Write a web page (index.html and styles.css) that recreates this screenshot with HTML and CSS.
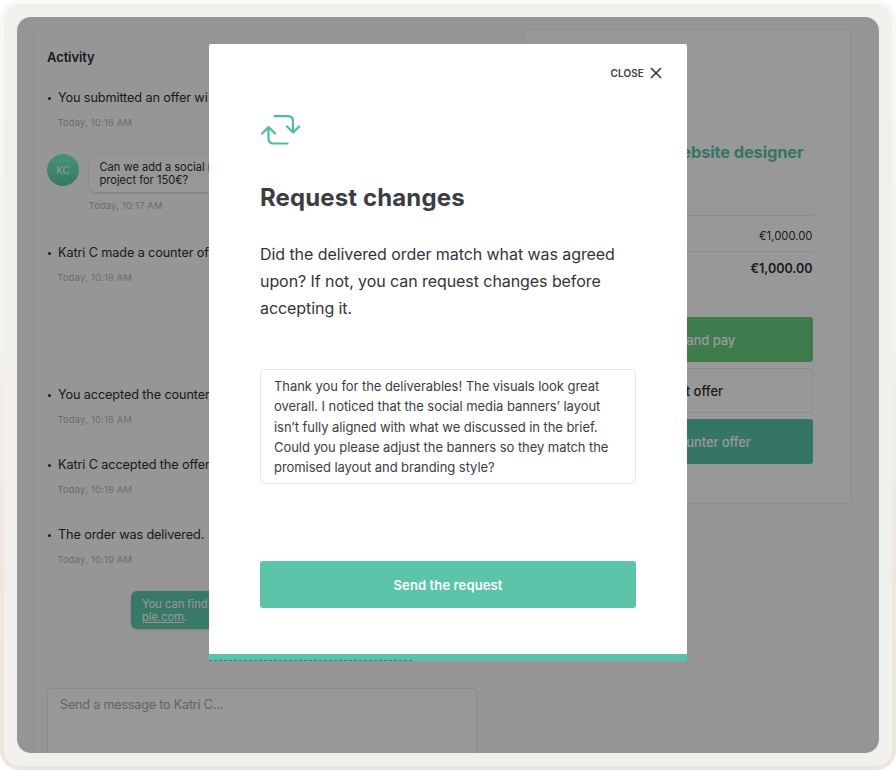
FILE: index.html
```
<!DOCTYPE html>
<html lang="en">
<head>
    <meta charset="UTF-8">
    <meta name="viewport" content="width=device-width, initial-scale=1.0">
    <title>Request changes</title>
    <link rel="stylesheet" href="styles.css">
</head>
<body>
<div class="frame">
    <div class="screen">
        <!-- Activity feed -->
        <div class="activity">
            <h3>Activity</h3>
            <div class="event">
                <p>You submitted an offer wi</p>
                <time>Today, 10:16 AM</time>
            </div>
            <div class="message">
                <div class="avatar">KC</div>
                <div class="message-body">
                    <div class="bubble">Can we add a social m<br>project for 150€?</div>
                    <time>Today, 10:17 AM</time>
                </div>
            </div>
            <div class="event">
                <p>Katri C made a counter of</p>
                <time>Today, 10:18 AM</time>
            </div>
            <div class="event event-gap">
                <p>You accepted the counter</p>
                <time>Today, 10:18 AM</time>
            </div>
            <div class="event">
                <p>Katri C accepted the offer</p>
                <time>Today, 10:18 AM</time>
            </div>
            <div class="event">
                <p>The order was delivered.</p>
                <time>Today, 10:19 AM</time>
            </div>
            <div class="bubble bubble-own">You can find<br><a>ple.com</a>.</div>
            <div class="message-input">Send a message to Katri C...</div>
        </div>

        <!-- Order summary -->
        <div class="order">
            <h2>Website designer</h2>
            <div class="price">€1,000.00</div>
            <div class="price total">€1,000.00</div>
            <div class="order-buttons">
                <button class="btn-green">Accept and pay</button>
                <button class="btn-outline">Reject offer</button>
                <button class="btn-teal">Make a counter offer</button>
            </div>
        </div>

        <!-- Request changes modal -->
        <div class="overlay">
            <div class="modal">
                <div class="close">
                    <span>CLOSE</span>
                    <svg width="12" height="12" viewBox="0 0 12 12"><path d="M1 1L11 11M11 1L1 11"/></svg>
                </div>
                <svg class="icon" width="40" height="32" viewBox="0 0 40 32">
                    <path d="M14.500 2.200H28Q33 2.200 33 7.200V18M27 12.500L33.200 18.500L39.200 12.500"/>
                    <path d="M27.500 29.500H13.500Q8.500 29.500 8.500 24.500V13.500M2.200 19.500L8.500 13L15 19.500"/>
                </svg>
                <h1>Request changes</h1>
                <p class="lead">Did the delivered order match what was agreed<br>upon? If not, you can request changes before<br>accepting it.</p>
                <div class="textarea">Thank you for the deliverables! The visuals look great<br>overall. I noticed that the social media banners’ layout<br>isn’t fully aligned with what we discussed in the brief.<br>Could you please adjust the banners so they match the<br>promised layout and branding style?</div>
                <button class="btn-send">Send the request</button>
            </div>
        </div>
    </div>
</div>
</body>
</html>
```
FILE: styles.css
```
* {
    box-sizing: border-box;
}

body {
    margin: 0;
    background: #fff;
    font-family: Inter, 'Liberation Sans', sans-serif;
    color: #2b2e36;
}

h1, h2, h3, p {
    margin: 0;
}

button {
    font-family: inherit;
    border: none;
    padding: 0;
    border-radius: 3px;
}

/* Frame */
.frame {
    width: 896px;
    height: 770px;
    padding: 13px;
    border: 4px solid transparent;
    border-radius: 20px;
    background: linear-gradient(#f0f1ec, #f0f1ec) padding-box,
                linear-gradient(#f9f9f7, #f4f1ea 45%, #efe6dc 75%, #ece6da) border-box;
}

.screen {
    position: relative;
    display: flex;
    height: 736px;
    border-radius: 14px;
    overflow: hidden;
    background: #f8f8f8;
}

/* Activity feed */
.activity {
    width: 448px;
    margin: 16px 41px 0 18px;
    padding: 15px 5px 0 12px;
    background: #fafafa;
    white-space: nowrap;
}

.activity h3 {
    font-size: 13px;
    line-height: 18px;
    font-weight: 600;
    letter-spacing: -0.1px;
    margin-bottom: 23px;
}

.event {
    margin-bottom: 29px;
    padding-left: 10.5px;
}

.event p {
    display: flex;
    align-items: center;
    font-size: 12.7px;
    line-height: 18px;
    letter-spacing: -0.12px;
}

.event p::before {
    content: "";
    width: 3px;
    height: 3px;
    margin: 1px 7px 0 -9.5px;
    border-radius: 50%;
    background: #2b2e36;
}

time {
    display: block;
    margin-top: 9px;
    font-size: 9.4px;
    line-height: 14px;
    letter-spacing: 0.2px;
    color: #b6b6b6;
}

.event + .event {
    margin-top: 29px;
    margin-bottom: 28px;
}

.event:nth-of-type(1) {
    margin-bottom: 24px;
}

.event.event-gap {
    margin-top: 101px;
}

.message {
    display: flex;
    gap: 9.5px;
    margin-bottom: 31px;
}

.message time {
    margin-top: 7px;
}

.avatar {
    width: 32px;
    height: 32px;
    border-radius: 50%;
    background: linear-gradient(#74f5cf, #58cba5);
    color: #fff;
    font-size: 10px;
    line-height: 32px;
    text-align: center;
}

.message-body {
    flex: 1;
}

.bubble {
    height: 38px;
    padding: 7px 11px;
    border-radius: 6px;
    background: #fcfcfc;
    box-shadow: 0 1px 3px rgba(0, 0, 0, 0.15);
    font-size: 11.1px;
    line-height: 13px;
}

.bubble-own {
    width: 345px;
    margin: -4px 0 59px 84px;
    background: #5cc8aa;
    color: #fff;
}

.bubble-own a {
    text-decoration: underline;
}

.message-input {
    width: 430px;
    height: 90px;
    padding: 7px 12px;
    border: 1px solid #e6e6ea;
    border-radius: 4px;
    background: #fefefe;
    color: #a8a8a8;
    font-size: 12.7px;
    line-height: 18px;
    letter-spacing: -0.24px;
}

/* Order summary */
.order {
    width: 327px;
    height: 475px;
    margin-top: 12px;
    padding: 110px 37.5px 0 37px;
    border: 1px solid #eee;
    background: #fefefe;
}

.order h2 {
    padding: 0 9px 51px 0;
    border-bottom: 1px solid #eaeaea;
    font-size: 16.4px;
    line-height: 24px;
    font-weight: 650;
    letter-spacing: -0.12px;
    color: #58c3a8;
    text-align: right;
}

.price {
    height: 36px;
    border-bottom: 1px solid #eaeaea;
    font-size: 11.3px;
    line-height: 41px;
    text-align: right;
}

.total {
    border: none;
    font-size: 12.5px;
    line-height: 33px;
    font-weight: 600;
}

.order-buttons {
    display: flex;
    flex-direction: column;
    gap: 6px;
    margin-top: 29px;
}

.order-buttons button {
    height: 45px;
    padding-top: 1px;
    font-size: 13px;
    font-weight: 500;
    color: #fff;
}

.order-buttons .btn-green {
    background: #69cf80;
    letter-spacing: -0.1px;
}

.order-buttons .btn-outline {
    background: #fefefe;
    border: 1px solid #eaeaea;
    color: #2b2e36;
    padding-top: 0;
}

.order-buttons .btn-teal {
    background: #58c3a8;
    letter-spacing: -0.1px;
}

/* Modal */
.overlay {
    position: absolute;
    inset: 0;
    padding: 27px 192px;
    background: rgba(0, 0, 0, 0.4);
}

.modal {
    position: relative;
    display: flex;
    flex-direction: column;
    width: 478px;
    height: 617px;
    padding: 20px 51px 0;
    border-bottom: 7px solid #58c3a8;
    border-radius: 2px 2px 0 0;
    background: #fff;
    color: #3c3d43;
}

/* Broken line along the lower edge */
.modal::after {
    content: "";
    position: absolute;
    left: 0;
    bottom: -7px;
    width: 205px;
    height: 1px;
    background: repeating-linear-gradient(90deg, #3f7f70 0 3px, #58c3a8 3px 5px);
}

.close {
    display: flex;
    align-items: center;
    align-self: flex-end;
    gap: 6px;
    height: 18px;
    margin-right: -26px;
    font-size: 10px;
    font-weight: 600;
    letter-spacing: 0.1px;
}

.close svg {
    stroke: #303136;
    stroke-width: 1.5;
    fill: none;
}

.icon {
    margin-top: 32px;
    fill: none;
    stroke: #4abf9f;
    stroke-width: 2.2;
    stroke-linecap: round;
    stroke-linejoin: round;
}

.modal h1 {
    margin-top: 36px;
    font-size: 24px;
    line-height: 32px;
    font-weight: 650;
    letter-spacing: 0.12px;
}

.lead {
    margin-top: 27px;
    font-size: 16px;
    line-height: 27px;
    letter-spacing: -0.07px;
    color: #333439;
    white-space: nowrap;
}

.textarea {
    height: 115px;
    margin-top: 47px;
    padding: 6px 13px;
    border: 1px solid #e6e6e8;
    border-radius: 5px;
    font-size: 13px;
    line-height: 20.25px;
    letter-spacing: -0.06px;
    white-space: nowrap;
}

.btn-send {
    height: 47px;
    margin-top: 77px;
    background: #5bc4a9;
    color: #fff;
    font-size: 13px;
    font-weight: 600;
    letter-spacing: 0.12px;
}
```
